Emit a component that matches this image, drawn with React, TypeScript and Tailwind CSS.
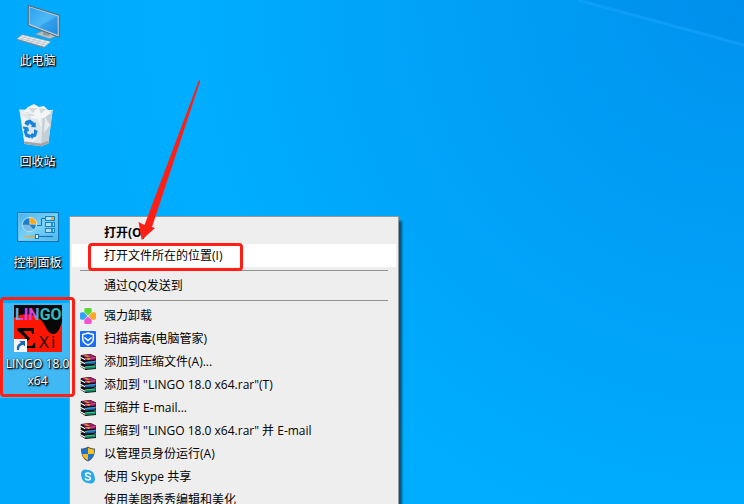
import React from 'react';

interface Shortcut {
    label: string;
    icon: React.ReactNode;
    selected?: boolean;
}

interface MenuEntry {
    label: string;
    icon?: React.ReactNode;
    bold?: boolean;
    active?: boolean;
}

const ComputerIcon = () => (
    <svg viewBox="0 0 48 48" className="size-12" aria-hidden="true">
        <defs>
            <linearGradient id="screen" x1="0" y1="0" x2="1" y2="1">
                <stop offset="0" stopColor="#2ba2ee" />
                <stop offset="0.5" stopColor="#4db8f8" />
                <stop offset="1" stopColor="#1f8ee6" />
            </linearGradient>
        </defs>
        <path d="M21 32l8-3 15 4-8 4z" fill="#b4c0c8" stroke="#7d8a94" strokeWidth=".6" />
        <path d="M29 28l7 2-1 4-6-1z" fill="#8d99a3" />
        <path d="M14.3 3.500l31 9.800v22l-31-12z" fill="#c3cdd4" stroke="#56646e" strokeWidth="1" />
        <path d="M15.600 5.200l28 9v18.500L15.600 22z" fill="url(#screen)" />
        <path d="M43.600 14.200v18.500L24 25.200z" fill="#1786dd" opacity=".35" />
        <path d="M8.300 32.800l28.400 6.900-6.400 5.200L2.800 37z" fill="#eef1f3" stroke="#99a5ad" strokeWidth=".6" />
        <path d="M2.800 37l27.500 7.900v1.300L2.800 38.100z" fill="#7e8a93" />
        <path d="M7 34.500l27 7M5 36l27 7.200M12 34l-5 4M17 35.200l-5 4M22 36.400l-5 4.300M27 37.600l-5 4.500M32 38.800l-5 4.600" stroke="#aab4bb" strokeWidth=".7" fill="none" />
    </svg>
);

const RecycleBinIcon = () => (
    <svg viewBox="0 0 48 48" className="size-12" aria-hidden="true">
        <path d="M5.300 6.500L38.700 7 34.300 40.500 27 43.200 10.500 41z" fill="#dfe6ea" />
        <path d="M29 12l9.700-5-4.400 33.500-7.300 2.700z" fill="#c3ced5" />
        <path d="M9 9l5-5 6-3 5 3 5-1 3 3 4 4-7 5-10 1z" fill="#f3f5f6" />
        <path d="M14 5l5 5 4-5zM25 5l2 6 5-5zM10 9l5 4 6 0-3-3z" fill="#d3dade" />
        <path d="M5.300 6.500L9 10l20 2 9.700-5" fill="none" stroke="#f0f5f8" strokeWidth=".8" />
        <path d="M7 12l6 3-4 14zM26 13l-3 3 5 9zM9 33l8 4 8-4-6 6-8-1zM31 14l5 8-6 8z" fill="#f5f8fa" opacity=".7" />
        <path d="M10.300 38.500l16.700 2 7.500-2.700-.3 2.700-7.200 2.700L10.500 41z" fill="#a9a39f" />
        <g fill="#1684dc">
            <path d="M11.500 18l4.500-1.500 4.500 3.500 1.200-.8v5.300l-5-.8 1.300-1.200-2.500-2-1.500 2.500-3.500-2.200z" />
            <path d="M9 23.500l5 .8 1.200 4-1.500-.5-.5 2.700 3 1.200v3.500l-4.500-1.400-2-4.800.8-3-1.500-.6z" />
            <path d="M20 26.200l3.700 1.600-1.700 5.700-3.500 1.200v1.600l-3-3.600 3-3.200v1.400l1.500-.4z" />
        </g>
    </svg>
);

const ControlPanelIcon = () => (
    <svg viewBox="0 0 48 48" className="size-12" aria-hidden="true">
        <defs>
            <linearGradient id="panel" x1="0" y1="0" x2="1" y2="1">
                <stop offset="0" stopColor="#46b4ec" />
                <stop offset="0.5" stopColor="#79d2f8" />
                <stop offset="1" stopColor="#4fb8ea" />
            </linearGradient>
        </defs>
        <rect x="3" y="8" width="42" height="30" fill="#1174b5" />
        <rect x="4.500" y="9.500" width="39" height="27" fill="url(#panel)" stroke="#8fdcfa" strokeWidth=".6" />
        <circle cx="15.300" cy="20.700" r="7" fill="#1b80cb" stroke="#d6f2fd" strokeWidth=".8" />
        <path d="M15.300 20.700H8.500a7 7 0 0 0 11.500 5z" fill="#b9e2f6" opacity=".6" />
        <path d="M15.800 20.200v-7a7 7 0 0 1 7 7z" fill="#fba71b" stroke="#fff" strokeWidth=".5" />
        <path d="M23 21.500h4.500v-7H31" fill="none" stroke="#1374b4" strokeWidth="1" />
        <g fill="#a5e0f8" stroke="#1681c4" strokeWidth="1">
            <rect x="31.500" y="12.500" width="9" height="4" />
            <rect x="31.500" y="18.500" width="9" height="4" />
            <rect x="31.500" y="24.500" width="9" height="4" />
        </g>
        <path d="M37 13h3v3h-3z" fill="#fba71b" />
        <path d="M37 19h2v3h-2zM37 25h2v3h-2z" fill="#2291d2" />
        <path d="M9 32.500h13" stroke="#f5a623" strokeWidth="1.200" />
        <path d="M24 32.500h15" stroke="#1576b8" strokeWidth="1.200" />
        <rect x="21.500" y="30.500" width="3" height="4" fill="#e3f6fd" stroke="#1576b8" strokeWidth="1" />
    </svg>
);

const LingoIcon = () => (
    <svg viewBox="0 0 48 48" className="size-12 [text-shadow:none]" aria-hidden="true">
        <defs>
            <linearGradient id="word" x1="0" y1="0" x2="1" y2="0">
                <stop offset="0" stopColor="#35dbe2" />
                <stop offset="0.15" stopColor="#d840e0" />
                <stop offset="0.4" stopColor="#d840e0" />
                <stop offset="0.5" stopColor="#35bcc8" />
                <stop offset="1" stopColor="#2cbfc0" />
            </linearGradient>
        </defs>
        <path d="M0 0h48v47H0z" fill="#ff1600" />
        <path d="M0 0h48v17c-3 9-5 12-9 12-6 0-8-11-13-15C20 9 9 7 0 13z" fill="#080808" />
        <text x="1" y="14.500" fontSize="16" fontWeight="700" fontFamily="Roboto, sans-serif" fill="url(#word)">LINGO</text>
        <path d="M3 23h17v6h-1.500l-1.500-3H9l7 7.500L8.500 41H18l2-3h1.200v5H3v-2l8.500-8L3 25z" fill="#060606" />
        <text x="25" y="43" fontSize="17" fontFamily="Open Sans, sans-serif" fill="#0a0a0a">X</text>
        <text x="37" y="43" fontSize="17" fontFamily="Open Sans, sans-serif" fill="#0a0a0a">i</text>
        <path d="M0 34h13v13H0z" fill="#f4f6f8" />
        <path d="M3 45c-.5-4 1-6.500 4-7L5.500 36H11v5.500l-1.800-1.700C6 40.500 5 42 5 45z" fill="#1766b5" />
    </svg>
);

const UninstallIcon = () => (
    <svg viewBox="0 0 16 16" className="size-4" aria-hidden="true">
        <path d="M8 7.500L4.300 4V1.500Q4.300 0 6 0h4q1.700 0 1.700 1.500V4z" fill="#55dc34" />
        <path d="M8.500 8L12 4.300h2.500Q16 4.300 16 6v4q0 1.700-1.500 1.700H12z" fill="#ffa62b" />
        <path d="M8 8.500l3.700 3.500v2.500Q11.700 16 10 16H6q-1.700 0-1.700-1.500V12z" fill="#f251d5" />
        <path d="M7.500 8L4 11.700H1.500Q0 11.700 0 10V6q0-1.700 1.500-1.700H4z" fill="#35a2f5" />
    </svg>
);

const ShieldCheckIcon = () => (
    <svg viewBox="0 0 16 16" className="size-4" aria-hidden="true">
        <rect width="16" height="16" rx="1" fill="#176ff5" />
        <path d="M8 2l5.300 1.600v4.200c0 3-2.300 5-5.300 6.200-3-1.200-5.300-3.200-5.300-6.200V3.600z" fill="none" stroke="#fff" strokeWidth="1.500" />
        <path d="M4.500 6.500L8 9.500l3.500-3" fill="none" stroke="#fff" strokeWidth="1.600" />
    </svg>
);

const ArchiveIcon = () => (
    <svg viewBox="0 0 16 16" className="size-4" aria-hidden="true">
        {/* Three stacked books, bottom one first */}
        <path d="M1 9.500l10-.5 5 2v4l-10.500 1L0 12.500z" fill="#101010" />
        <path d="M5 12.500l10.500-1v2.700L5 15z" fill="#0f8f68" />
        <path d="M5 12.500l10.500-1v1L5 13.500z" fill="#43c394" />
        <path d="M0 11l5 2.500v1.300L0 12.300z" fill="#fff" />
        <path d="M1 5l10-.5 5 2v4l-10.500 1L0 8z" fill="#101010" />
        <path d="M5 8l10.500-1v2.700L5 10.500z" fill="#1264a8" />
        <path d="M5 8l10.500-1v1L5 9z" fill="#4aa9e6" />
        <path d="M0 6.500L5 9v1.300L0 7.800z" fill="#fff" />
        <path d="M1 1l9.500-1L16 2.500v3.800L5.500 7.300 0 4z" fill="#101010" />
        <path d="M1.300 1.200l9-.9L15.500 2.600 6 3.700z" fill="#b01868" />
        <path d="M5 4.200l10.500-1v2.300L5 6.300z" fill="#c2186e" />
        <path d="M5 4.200l10.500-1v.9L5 5z" fill="#ee7ab8" />
        <path d="M4 1.200l2.500-.2L10 3l-2.500.3zM7.500 4h2.200v2H7.500z" fill="#c9a92a" />
        <path d="M0 2.300L5 5v1.200L0 3.600z" fill="#fff" />
    </svg>
);

const AdminShieldIcon = () => (
    <svg viewBox="0 0 16 16" className="size-4" aria-hidden="true">
        <path d="M8 .5C10 2 12.500 2.500 15 2.500c0 6-1.500 10.500-7 13-5.500-2.500-7-7-7-13C3.500 2.500 6 2 8 .5z" fill="#4d5a63" />
        <path d="M8 1.800V8H2.200c-.2-1.500-.2-3-.1-4.500C4.200 3.400 6.300 3 8 1.800z" fill="#1b74cf" />
        <path d="M8 1.800V8h5.800c.2-1.500.2-3 .1-4.500-2.100-.1-4.200-.5-5.900-1.700z" fill="#fcc31f" />
        <path d="M2.300 8H8v6.400C4.500 12.700 2.800 10.700 2.300 8z" fill="#fcb913" />
        <path d="M13.700 8H8v6.400c3.500-1.700 5.200-3.700 5.700-6.400z" fill="#1b74cf" />
    </svg>
);

const SkypeIcon = () => (
    <svg viewBox="0 0 16 16" className="size-4" aria-hidden="true">
        <circle cx="5.500" cy="5" r="4.500" fill="#28a8ea" />
        <circle cx="10.500" cy="10" r="4.500" fill="#28a8ea" />
        <circle cx="8" cy="7.500" r="6.500" fill="#28a8ea" />
        <path d="M10.500 5.300C10 4.300 9.200 4 8 4c-1.400 0-2.500.6-2.500 1.700 0 2.300 5 1.300 5 3.600 0 1.100-1.100 1.700-2.500 1.700-1.300 0-2.300-.5-2.700-1.500" fill="none" stroke="#fff" strokeWidth="1.500" strokeLinecap="round" />
    </svg>
);

const shortcuts: Shortcut[] = [
    { label: '此电脑', icon: <ComputerIcon /> },
    { label: '回收站', icon: <RecycleBinIcon /> },
    { label: '控制面板', icon: <ControlPanelIcon /> },
    { label: 'LINGO 18.0 x64', icon: <LingoIcon />, selected: true },
];

// Each inner list is one group, groups are split by a separator
const menuGroups: MenuEntry[][] = [
    [
        { label: '打开(O)', bold: true },
        { label: '打开文件所在的位置(I)', active: true },
    ],
    [{ label: '通过QQ发送到' }],
    [
        { label: '强力卸载', icon: <UninstallIcon /> },
        { label: '扫描病毒(电脑管家)', icon: <ShieldCheckIcon /> },
        { label: '添加到压缩文件(A)...', icon: <ArchiveIcon /> },
        { label: '添加到 "LINGO 18.0 x64.rar"(T)', icon: <ArchiveIcon /> },
        { label: '压缩并 E-mail...', icon: <ArchiveIcon /> },
        { label: '压缩到 "LINGO 18.0 x64.rar" 并 E-mail', icon: <ArchiveIcon /> },
        { label: '以管理员身份运行(A)', icon: <AdminShieldIcon /> },
        { label: '使用 Skype 共享', icon: <SkypeIcon /> },
        { label: '使用美图秀秀编辑和美化' },
    ],
];

const DesktopShortcut: React.FC<Shortcut> = ({ label, icon, selected }) => (
    <button
        type="button"
        className={`flex min-h-[95px] w-full flex-col items-center pt-0.5 text-xs leading-[17px] text-white [text-shadow:1px_1px_1px_#000,1px_1px_2px_#000,0_0_2px_rgba(0,0,0,0.6)] ${
            selected ? 'bg-[#40b8f4]' : ''
        }`}
    >
        {icon}
        <span className="mt-0.5">{label}</span>
    </button>
);

const ContextMenu = () => (
    <div
        role="menu"
        className="absolute top-[216px] left-[69px] w-[330px] border border-[#979797] bg-[#eeeeee] px-0.5 py-1 shadow-[3px_5px_2px_rgba(0,0,0,0.5)]"
    >
        {menuGroups.map((group, index) => (
            <React.Fragment key={index}>
                {index > 0 && <div role="separator" className="mx-2 my-[3px] h-px bg-[#919191]" />}
                {group.map((entry) => (
                    <button
                        key={entry.label}
                        type="button"
                        role="menuitem"
                        className={`flex h-[23px] w-full items-center gap-2 px-2 text-left text-xs whitespace-nowrap text-black ${
                            entry.active ? 'bg-white' : ''
                        } ${entry.bold ? 'font-bold' : ''}`}
                    >
                        <span className="size-4 shrink-0">{entry.icon}</span>
                        {entry.label}
                    </button>
                ))}
            </React.Fragment>
        ))}
    </div>
);

const App: React.FC = () => {
    return (
        <main className="relative h-screen overflow-hidden bg-[radial-gradient(circle_at_100%_0,#0092ee,#00a2f8_320px,#00adfe_560px,#00a8fc_800px)] font-['Open_Sans','Noto_Sans_CJK_SC',sans-serif]">
            {/* Light beam of the wallpaper */}
            <svg viewBox="0 0 200 50" className="absolute top-0 right-0 w-[200px]" aria-hidden="true">
                <path d="M34 0L200 45V0z" fill="#0088e4" opacity=".2" />
                <path d="M34 0L200 45" stroke="#1ba6ff" strokeWidth="3" opacity=".5" />
            </svg>

            <nav className="flex w-[75px] flex-col gap-1.5">
                {shortcuts.map((item) => (
                    <DesktopShortcut key={item.label} {...item} />
                ))}
            </nav>

            <ContextMenu />

            {/* Annotations */}
            <div className="absolute top-[297px] left-0 h-[100px] w-[75px] rounded-sm border-3 border-[#ff1f14]" />
            <div className="absolute top-[243px] left-[88px] h-7 w-[155px] rounded-sm border-3 border-[#ff1f14]" />
            <svg viewBox="0 0 70 165" className="absolute top-[78px] left-[135px] w-[70px]" aria-hidden="true">
                <path d="M64 2l1.200 1L17 149l3 1L6.700 162 3.500 144l6 3z" fill="#ff1f14" />
            </svg>
        </main>
    );
};

export default App;
